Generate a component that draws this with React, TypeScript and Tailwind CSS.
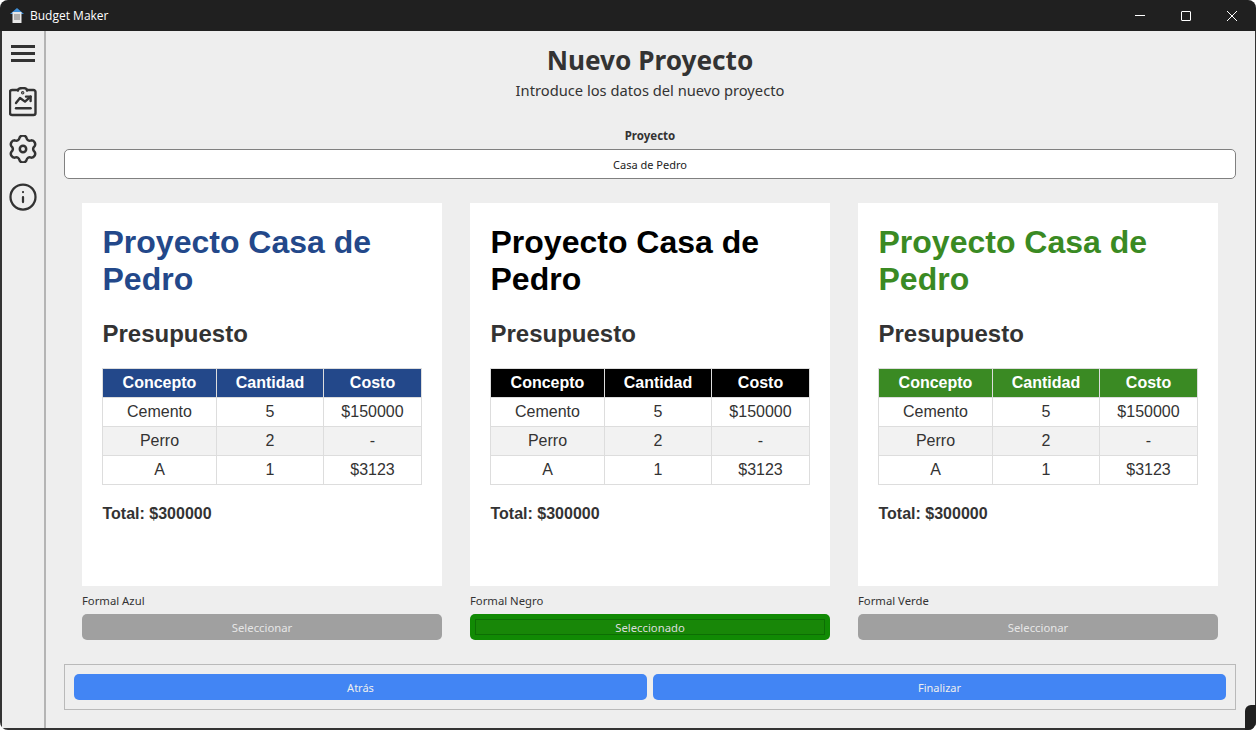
import { Info } from "lucide-react";

const rows = [
  ["Cemento", "5", "$150000"],
  ["Perro", "2", "-"],
  ["A", "1", "$3123"],
];

const templates = [
  { name: "Formal Azul", title: "text-[#23488a]", head: "bg-[#23488a]", selected: false },
  { name: "Formal Negro", title: "text-black", head: "bg-black", selected: true },
  { name: "Formal Verde", title: "text-[#3a8a23]", head: "bg-[#3a8a23]", selected: false },
];

const ReportIcon = () => (
  <svg width="28" height="30" viewBox="0 0 28 30" fill="none" stroke="#333333" strokeWidth="2.4" strokeLinecap="round" strokeLinejoin="round">
    <path d="M9 3H3a2 2 0 0 0-2 2v21a2 2 0 0 0 2 2h21.500a2 2 0 0 0 2-2V5a2 2 0 0 0-2-2H18" />
    <path d="M9 3.500C9 2 11 1 13.700 1S18 2 18 3.500" />
    <path d="M7 16l4-5 5 3.600 5.600-5" />
    <path d="M17 9.600h4.600V14" />
    <path d="M7 21.300h14.600" />
    <circle cx="13.700" cy="5.700" r="0.5" fill="#333333" />
  </svg>
);

// six rounded lobes around a small hole
const gearPath = () => {
  const pt = (deg: number, r: number) => {
    const a = (deg * Math.PI) / 180;
    return `${(14 + r * Math.cos(a)).toFixed(2)} ${(14 + r * Math.sin(a)).toFixed(2)}`;
  };
  let d = `M${pt(-90 - 16, 12)}`;
  for (let k = 0; k < 6; k++) {
    const a = k * 60 - 90;
    d += ` A3.800 3.800 0 0 1 ${pt(a + 16, 12)}`;
    d += ` Q${pt(a + 30, 8.6)} ${pt(a + 60 - 16, 12)}`;
  }
  return d + " Z";
};

const GearIcon = () => (
  <svg width="28" height="28" viewBox="0 0 28 28" fill="none" stroke="#333333" strokeWidth="2.5" strokeLinejoin="round">
    <path d={gearPath()} />
    <circle cx="14" cy="14" r="3.200" />
  </svg>
);

const TemplateCard = ({ t }: { t: (typeof templates)[number] }) => (
  <div className="w-[360px]">
    <div className="h-[383px] bg-white pt-[21px] pr-[20px] pl-[20.5px] font-['Liberation_Sans',sans-serif]">
      <h2 className={`text-[32px] font-bold leading-[37px] ${t.title}`}>Proyecto Casa de Pedro</h2>
      <h3 className="mt-[22px] text-2xl leading-[28px] font-bold text-[#333333]">Presupuesto</h3>
      <table className="mt-[20px] -ml-[0.5px] w-[320px] table-fixed border-collapse text-base text-[#333333]">
        <thead>
          <tr className={`h-[29px] ${t.head} text-white`}>
            <th className="w-[114px] border border-[#dddddd] font-bold">Concepto</th>
            <th className="w-[107px] border border-[#dddddd] font-bold">Cantidad</th>
            <th className="border border-[#dddddd] font-bold">Costo</th>
          </tr>
        </thead>
        <tbody>
          {rows.map((r, i) => (
            <tr key={r[0]} className={`h-[29px] ${i === 1 ? "bg-[#f2f2f2]" : "bg-white"}`}>
              {r.map((c) => (
                <td key={c} className="border border-[#dddddd] text-center">{c}</td>
              ))}
            </tr>
          ))}
        </tbody>
      </table>
      <p className="mt-[20px] text-base leading-[18px] font-bold text-[#333333]">Total: $300000</p>
    </div>
    <p className="mt-[7px] h-[16px] text-[11.3px] leading-[16px] text-[#333333]">{t.name}</p>
    {t.selected ? (
      <div className="mt-[5px] h-[26px] rounded-[5px] bg-[#118a04] p-[5px]">
        <div className="flex h-[16px] items-center justify-center border border-[#0d6e04] bg-[#188708] pt-[2px] text-[11.3px] text-[#dddddd]">Seleccionado</div>
      </div>
    ) : (
      <div className="mt-[5px] flex h-[26px] items-center justify-center rounded-[5px] bg-[#a0a0a0] pt-[2px] text-[11.3px] text-[#e6e6e6]">Seleccionar</div>
    )}
  </div>
);

const App = () => {
  return (
    <div className="relative flex h-[730px] w-[1256px] flex-col overflow-hidden rounded-[8px] bg-[#eeeeee] font-['Noto_Sans',sans-serif]">
      <div className="flex h-[31px] shrink-0 items-center bg-[#202020] pl-[10px] text-white">
        <svg width="14" height="15" viewBox="0 0 14 15">
          <path d="M7 0L0 6h14z" fill="#3f8fd8" />
          <rect x="2.500" y="4" width="9" height="11" fill="#e8e8e8" />
          <path d="M4 7h6M4 9h6M4 11h6" stroke="#777777" />
        </svg>
        <span className="ml-[6px] font-['Open_Sans',sans-serif] text-xs">Budget Maker</span>
        <div className="ml-auto flex items-center pr-[19px]">
          <div className="h-px w-[10px] bg-white" />
          <div className="ml-[36px] h-[10px] w-[10px] rounded-[1px] border border-white" />
          <svg className="ml-[36px]" width="10" height="10" viewBox="0 0 10 10" stroke="white" strokeWidth="1">
            <path d="M0 0l10 10M10 0L0 10" />
          </svg>
        </div>
      </div>
      <div className="flex min-h-0 flex-1 border-r border-b-2 border-l-2 border-[#333333]">
        <aside className="flex w-[44px] shrink-0 flex-col items-center border-r-2 border-[#b4b4b4] bg-[#eeeeee] pt-[14px]">
          <div className="flex w-[24px] flex-col gap-[4px]">
            <div className="h-[3px] bg-[#333333]" />
            <div className="h-[3px] bg-[#333333]" />
            <div className="h-[3px] bg-[#333333]" />
          </div>
          <div className="mt-[25px]"><ReportIcon /></div>
          <div className="mt-[18px]"><GearIcon /></div>
          <Info className="mt-[19px] text-[#333333]" size={30} strokeWidth={1.8} />
        </aside>
        <main className="flex min-w-0 flex-1 flex-col items-center pr-[19px] pl-[18px]">
          <h1 className="mt-[12px] text-[26.2px] leading-[34px] font-bold text-[#333333]">Nuevo Proyecto</h1>
          <p className="mt-px text-[14.7px] leading-[24px] text-[#333333]">Introduce los datos del nuevo proyecto</p>
          <p className="mt-[25px] text-[11.500px] leading-[18px] font-bold text-[#333333]">Proyecto</p>
          <div className="mt-[4px] flex h-[30px] w-full shrink-0 items-center justify-center rounded-[5px] border border-[#808080] bg-white pt-[2px] text-[11px] text-[#222222]">
            Casa de Pedro
          </div>
          <div className="mt-[24px] flex w-full justify-center gap-[28px]">
            {templates.map((t) => (
              <TemplateCard key={t.name} t={t} />
            ))}
          </div>
          <div className="mt-[24px] flex h-[46px] w-full shrink-0 items-center gap-[6px] border border-[#b9b9b9] px-[9px]">
            <div className="flex h-[26px] flex-1 items-center justify-center rounded-[5px] bg-[#4285f4] pt-[2px] text-[11px] text-[#eeeeee]">Atrás</div>
            <div className="flex h-[26px] flex-1 items-center justify-center rounded-[5px] bg-[#4285f4] pt-[2px] text-[11px] text-[#eeeeee]">Finalizar</div>
          </div>
        </main>
      </div>
      <div className="absolute right-0 bottom-0 h-[25px] w-[11px] rounded-tl-[6px] bg-[#202020]" />
    </div>
  );
};

export default App;
